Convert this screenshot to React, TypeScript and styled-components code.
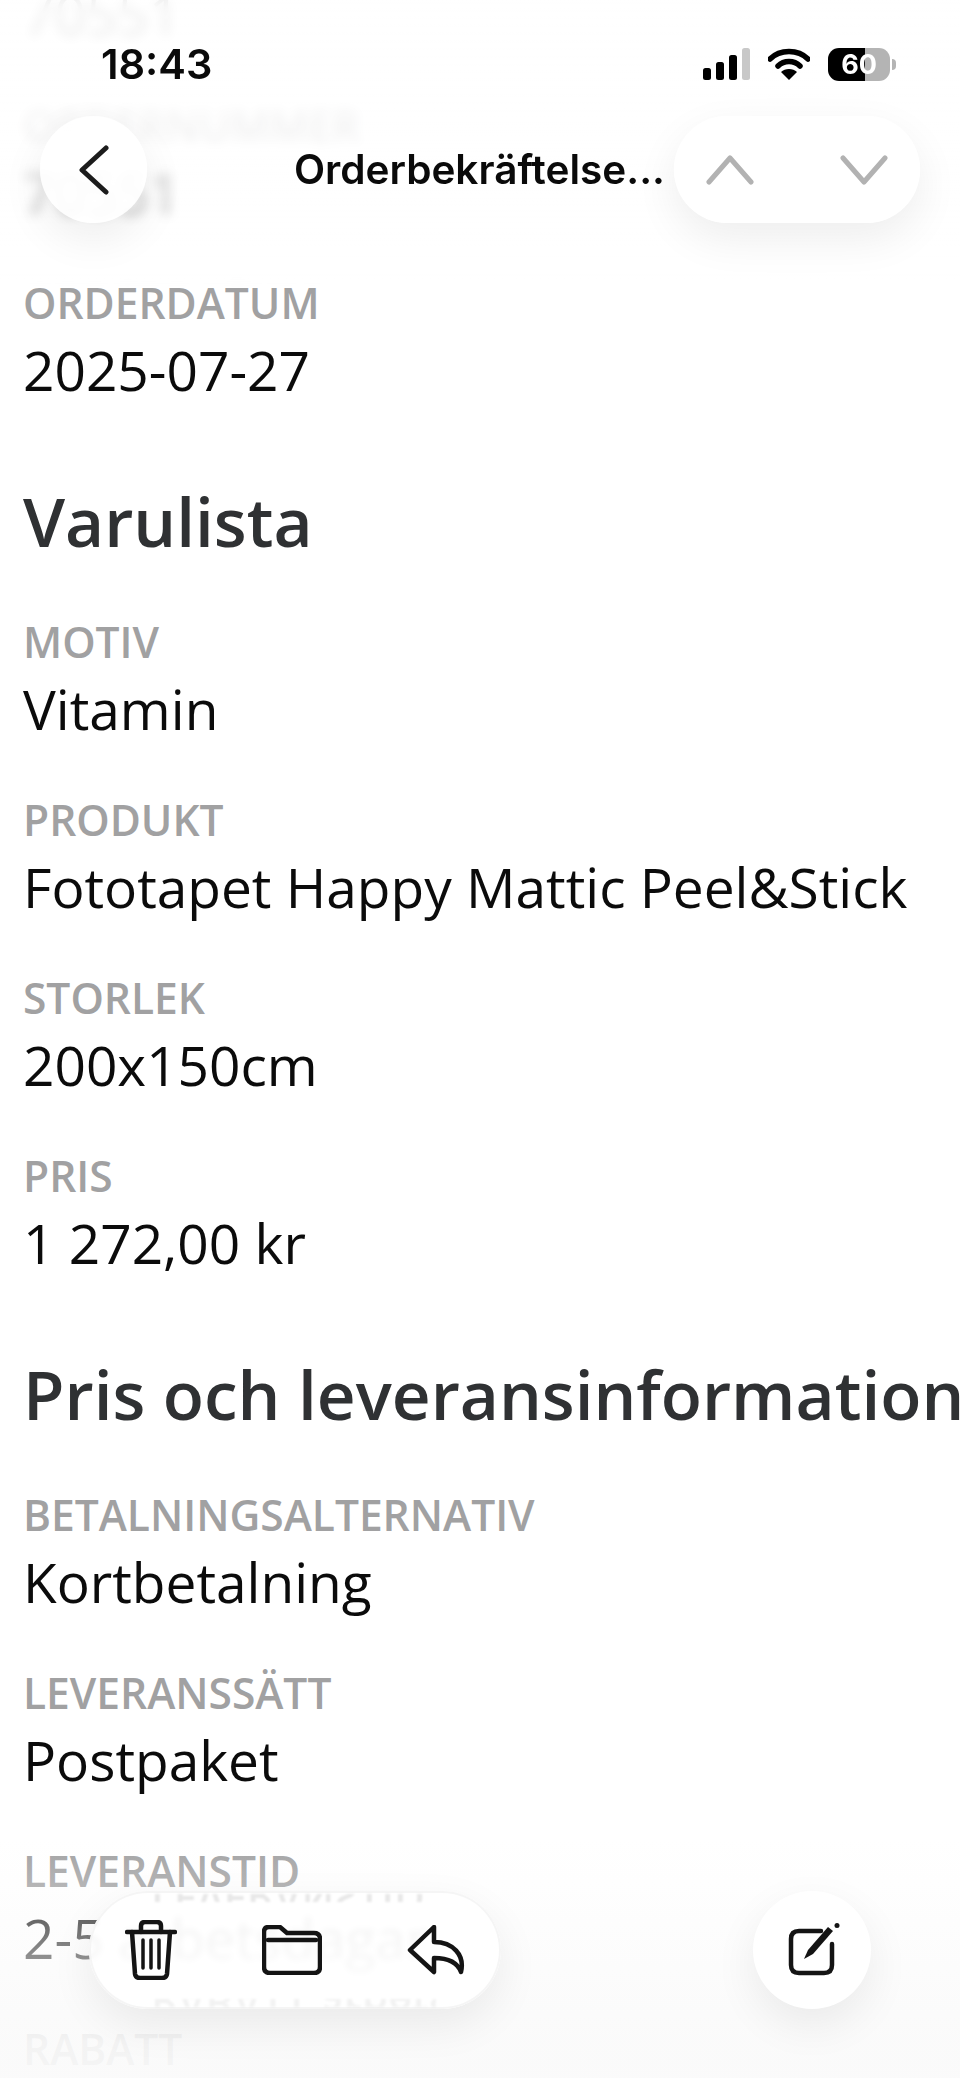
import * as React from "react";
import styled, { createGlobalStyle } from "styled-components";

const GlobalStyle = createGlobalStyle`
	html, body {
		margin: 0;
		padding: 0;
		background: #fff;
	}
`;

const Screen = styled.div`
	position: relative;
	width: 960px;
	height: 2078px;
	overflow: hidden;
	background: #fff;
	font-family: "Open Sans", sans-serif;
`;

const Content = styled.main`
	display: flex;
	flex-direction: column;
	padding: 0 0 0 23px;
	margin-top: -78px;
`;

const Field = styled.div`
	height: 178px;
	flex: none;
`;

const Label = styled.div`
	font-size: 42.5px;
	line-height: 50px;
	font-weight: 600;
	color: #a1a1a2;
	white-space: nowrap;
`;

const Value = styled.div`
	font-size: 55px;
	line-height: 72px;
	margin-top: 6px;
	color: #0b0b0b;
	white-space: nowrap;
`;

const Heading = styled.h2`
	margin: 21px 0 0;
	height: 140px;
	flex: none;
	font-size: 67.5px;
	line-height: 88px;
	font-weight: 600;
	color: #2f3133;
	white-space: nowrap;
`;

const TopFade = styled.div`
	position: absolute;
	inset: 0 0 auto 0;
	height: 290px;
	backdrop-filter: blur(6px);
	background: linear-gradient(rgba(255, 255, 255, 0.93), rgba(255, 255, 255, 0.87) 40%, rgba(255, 255, 255, 0.74) 70%, rgba(255, 255, 255, 0));
	mask-image: linear-gradient(#000 80%, transparent);
`;

const BottomFade = styled.div`
	position: absolute;
	inset: auto 0 0 0;
	height: 240px;
	background: linear-gradient(rgba(255, 255, 255, 0), rgba(250, 250, 250, 0.45) 40%, rgba(250, 250, 250, 0.92) 85%, rgba(250, 250, 250, 0.94));
`;

const StatusBar = styled.div`
	position: absolute;
	top: 40px;
	left: 101px;
	right: 70px;
	height: 48px;
	display: flex;
	align-items: center;
	justify-content: space-between;
`;

const Clock = styled.span`
	font-family: Inter, sans-serif;
	font-size: 41.5px;
	font-weight: 600;
	color: #0a0a0a;
`;

const StatusIcons = styled.div`
	display: flex;
	align-items: center;
	gap: 18px;
`;

const Battery = styled.div`
	position: relative;
	width: 62px;
	height: 33px;
	border-radius: 11px;
	background: linear-gradient(90deg, #000 0 60%, #b4b4b4 60%);
	display: flex;
	align-items: center;
	justify-content: center;
	color: #fff;
	font-family: Inter, sans-serif;
	font-size: 27px;
	font-weight: 700;

	&::after {
		content: "";
		position: absolute;
		right: -6px;
		top: 11px;
		width: 4px;
		height: 11px;
		border-radius: 0 4px 4px 0;
		background: #b4b4b4;
	}
`;

const NavBar = styled.div`
	position: absolute;
	top: 116px;
	left: 40px;
	right: 40px;
	height: 107px;
	display: flex;
	align-items: center;
`;

const Glass = styled.div`
	height: 100%;
	flex: none;
	display: flex;
	align-items: center;
	background: rgba(255, 255, 255, 0.88);
	border-radius: 54px;
	box-shadow: 0 16px 44px rgba(0, 0, 0, 0.07);
`;

const RoundButton = styled(Glass)`
	width: 107px;
	justify-content: center;
`;

const NavTitle = styled.div`
	flex: 1;
	text-align: right;
	padding-right: 9px;
	font-family: Inter, sans-serif;
	font-size: 40.5px;
	font-weight: 600;
	color: #0a0a0a;
	white-space: nowrap;
`;

const Stepper = styled(Glass)`
	width: 246px;
	justify-content: space-between;
	padding: 0 32px;
	box-sizing: border-box;
`;

const BottomBar = styled.div`
	position: absolute;
	top: 1891px;
	left: 89px;
	right: 89px;
	height: 118px;
	display: flex;
	justify-content: space-between;
`;

const ToolPill = styled(Glass)`
	position: relative;
	width: 412px;
	border-radius: 59px;
	backdrop-filter: blur(3px);
	background: rgba(255, 255, 255, 0.92);
	box-shadow: 0 16px 44px rgba(0, 0, 0, 0.07), inset 0 0 0 2px rgba(243, 243, 243, 0.8);
	padding: 0 36px;
	box-sizing: border-box;
	justify-content: space-between;
`;

// the mirrored slice of the text behind the pill, seen along its glass edge
const Refraction = styled.div<{ $bottom?: boolean }>`
	position: absolute;
	left: 62px;
	${(p) => (p.$bottom ? "bottom: 2px;" : "top: 3px;")}
	width: 285px;
	height: 8px;
	overflow: hidden;
	font-size: 42px;
	line-height: 8px;
	font-weight: 600;
	white-space: nowrap;
	color: rgba(0, 0, 0, ${(p) => (p.$bottom ? 0.05 : 0.09)});
	filter: blur(1px);
	transform: scaleY(-1);
`;

const ComposeButton = styled(Glass)`
	width: 118px;
	border-radius: 59px;
	justify-content: center;
	background: #fff;
`;

const icon = { fill: "none", stroke: "#141414", strokeWidth: 4.5, strokeLinecap: "round", strokeLinejoin: "round" } as const;

export default function App() {
	return (
		<Screen>
			<GlobalStyle />
			<Content>
				<Field><Label>ORDERNUMMER</Label><Value>70551</Value></Field>
				<Field><Label>ORDERNUMMER</Label><Value>70551</Value></Field>
				<Field><Label>ORDERDATUM</Label><Value>2025-07-27</Value></Field>
				<Heading>Varulista</Heading>
				<Field><Label>MOTIV</Label><Value>Vitamin</Value></Field>
				<Field><Label>PRODUKT</Label><Value>Fototapet Happy Mattic Peel&amp;Stick</Value></Field>
				<Field><Label>STORLEK</Label><Value>200x150cm</Value></Field>
				<Field><Label>PRIS</Label><Value>1 272,00 kr</Value></Field>
				<Heading>Pris och leveransinformation</Heading>
				<Field><Label>BETALNINGSALTERNATIV</Label><Value>Kortbetalning</Value></Field>
				<Field><Label>LEVERANSSÄTT</Label><Value>Postpaket</Value></Field>
				<Field><Label>LEVERANSTID</Label><Value>2-5 arbetsdagar</Value></Field>
				<Field><Label>RABATT</Label></Field>
			</Content>
			<TopFade />
			<BottomFade />
			<StatusBar>
				<Clock>18:43</Clock>
				<StatusIcons>
					<svg width="48" height="32" viewBox="0 0 48 32">
						<rect x="1" y="20" width="8" height="12" rx="2.5" fill="#000" />
						<rect x="14" y="14" width="8" height="18" rx="2.5" fill="#000" />
						<rect x="27" y="7" width="8" height="25" rx="2.5" fill="#000" />
						<rect x="40" y="0" width="8" height="32" rx="2.5" fill="#c8c8c8" />
					</svg>
					<svg width="42" height="32" viewBox="0 0 42 32">
						<path d="M2 11 C12 1 30 1 40 11" fill="none" stroke="#000" strokeWidth="5.5" strokeLinecap="round" />
						<path d="M10 18 C16 12 26 12 32 18" fill="none" stroke="#000" strokeWidth="5.5" strokeLinecap="round" />
						<path d="M21 32 L13 24 C17 20 25 20 29 24 Z" fill="#000" />
					</svg>
					<Battery>60</Battery>
				</StatusIcons>
			</StatusBar>
			<NavBar>
				<RoundButton>
					<svg width="34" height="50" viewBox="0 0 34 50">
						<path d="M29 3 L5 25 L29 47" fill="none" stroke="#1c1c1c" strokeWidth="5" strokeLinecap="round" strokeLinejoin="round" />
					</svg>
				</RoundButton>
				<NavTitle>Orderbekräftelse...</NavTitle>
				<Stepper>
					<svg width="48" height="30" viewBox="0 0 48 30">
						<path d="M3 27 L24 3 L45 27" fill="none" stroke="#b2b2b2" strokeWidth="5" strokeLinecap="round" strokeLinejoin="round" />
					</svg>
					<svg width="48" height="30" viewBox="0 0 48 30">
						<path d="M3 3 L24 27 L45 3" fill="none" stroke="#b2b2b2" strokeWidth="5" strokeLinecap="round" strokeLinejoin="round" />
					</svg>
				</Stepper>
			</NavBar>
			<BottomBar>
				<ToolPill>
					<Refraction aria-hidden>LEVERANSTID</Refraction>
					<Refraction aria-hidden $bottom>RABATT arbetsdagar</Refraction>
					<svg width="52" height="60" viewBox="0 0 52 60">
						<path {...icon} d="M2 12 H50" />
						<path {...icon} d="M7 12 L10 54 Q10.500 58 15 58 H37 Q41.500 58 42 54 L45 12" />
						<path {...icon} d="M16 12 V6 Q16 2 20 2 H32 Q36 2 36 6 V12" />
						<path {...icon} strokeWidth={3.500} d="M18 20 V48 M26 20 V48 M34 20 V48" />
					</svg>
					<svg width="60" height="50" viewBox="0 0 60 50">
						<path {...icon} d="M2 7 Q2 2 7 2 H18 L25 8 H52 Q58 8 58 14 V42 Q58 48 52 48 H8 Q2 48 2 42 Z" />
						<path {...icon} d="M6 15 H54" />
					</svg>
					<svg width="58" height="50" viewBox="0 0 58 50">
						<path {...icon} d="M27 2 L3 25 L27 47 V33 C38 33 50 36 54 47 C58 30 46 17 27 17 Z" />
					</svg>
				</ToolPill>
				<ComposeButton>
					<svg width="56" height="54" viewBox="0 0 56 54">
						<path {...icon} d="M37 8 H15 Q7 8 7 16 V42 Q7 50 15 50 H40 Q48 50 48 42 V21" />
						<path d="M20 36 L24 27 L44 4 L49 8 L29 31 Z" fill="#141414" />
						<circle cx="53" cy="2.500" r="2.500" fill="#141414" />
					</svg>
				</ComposeButton>
			</BottomBar>
		</Screen>
	);
}
